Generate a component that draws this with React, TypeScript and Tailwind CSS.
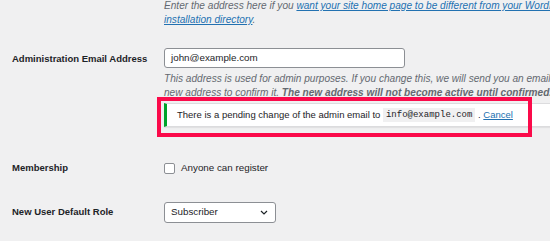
export default function App() {
  return (
    <div className="relative h-[241px] w-[550px] overflow-hidden bg-[#f0f0f1] font-['Liberation_Sans',Arial,sans-serif] text-[9.5px] text-[#1d2327]">
      {/* site address description (cut off at top) */}
      <div className="-mt-[1px] pl-[164px] whitespace-nowrap text-[10.1px] italic leading-[14px] text-[#646970]">
        <div>
          Enter the address here if you{" "}
          <a className="text-[#2271b1] underline">
            want your site home page to be different from your WordPress
          </a>
        </div>
        <div>
          <a className="text-[#2271b1] underline">installation directory</a>.
        </div>
      </div>

      {/* admin email */}
      <div className="mt-[21px] flex">
        <div className="w-[164px] shrink-0 pl-[12px] pt-[4px] font-bold leading-[14px]">
          Administration Email Address
        </div>
        <div className="min-w-0 flex-1 whitespace-nowrap">
          <div className="flex h-[20px] w-[241px] items-center rounded-[3px] border border-[#8c8f94] bg-white pl-[6px] text-[9.8px]">
            john@example.com
          </div>
          <div className="mt-[4px] text-[10.1px] italic leading-[14px] text-[#646970]">
            <div>
              This address is used for admin purposes. If you change this, we
              will send you an email at your
            </div>
            <div>
              new address to confirm it.{" "}
              <strong>The new address will not become active until confirmed.</strong>
            </div>
          </div>
          <div className="relative mt-[3px]">
            <div className="flex h-[24px] w-[400px] items-center border border-[#dcdcde] border-l-[3px] border-l-[#00a32a] bg-white pl-[10px] shadow-[0_1px_1px_rgba(0,0,0,0.06)]">
              There is a pending change of the admin email to&nbsp;
              <code className="bg-[#f0f0f1] px-[3px] py-[1px] font-['Liberation_Mono',monospace] text-[9px] leading-[12px]">
                info@example.com
              </code>
              &nbsp;.&nbsp;
              <a className="text-[#2271b1] underline">Cancel</a>
            </div>
            <div className="absolute left-[-7px] top-[-6px] h-[40px] w-[375px] border-[4px] border-[#fb0a4a]"></div>
          </div>
        </div>
      </div>

      {/* membership */}
      <div className="mt-[34px] flex items-center">
        <div className="w-[164px] shrink-0 pl-[12px] font-bold">Membership</div>
        <div className="flex items-center gap-[6px]">
          <span className="h-[11px] w-[11px] rounded-[2px] border border-[#8c8f94] bg-white"></span>
          <span className="text-[9.8px]">Anyone can register</span>
        </div>
      </div>

      {/* default role */}
      <div className="mt-[26px] flex items-center">
        <div className="w-[164px] shrink-0 pl-[12px] font-bold">New User Default Role</div>
        <div className="flex h-[21px] w-[112px] items-center justify-between rounded-[3px] border border-[#8c8f94] bg-white pl-[6px] pr-[7px] text-[9.8px]">
          <span>Subscriber</span>
          <svg width="8" height="5" viewBox="0 0 8 5" fill="none">
            <path d="M1 1l3 3 3-3" stroke="#1d2327" strokeWidth="1.2" />
          </svg>
        </div>
      </div>
    </div>
  );
}
